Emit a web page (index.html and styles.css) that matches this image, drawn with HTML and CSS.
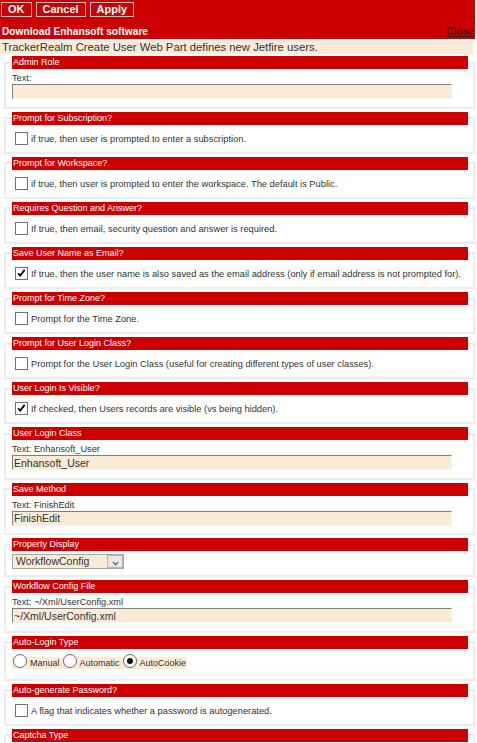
FILE: index.html
```html
<!DOCTYPE html>
<html>
<head>
<meta charset="utf-8">
<title>Create User Web Part</title>
<link rel="stylesheet" href="styles.css">
</head>
<body>
<div class="page">
  <div class="header">
    <div class="buttons">
      <button class="btn">OK</button>
      <button class="btn">Cancel</button>
      <button class="btn">Apply</button>
    </div>
    <div class="titlebar">
      <span class="title">Download Enhansoft software</span>
      <a class="close">Close</a>
    </div>
  </div>
  <div class="desc">TrackerRealm Create User Web Part defines new Jetfire users.</div>

  <fieldset class="prop prop-text">
    <legend>Admin Role</legend>
    <div class="label">Text:</div>
    <input class="text" type="text" value="">
  </fieldset>

  <fieldset class="prop prop-check">
    <legend>Prompt for Subscription?</legend>
    <div class="check"><span class="box"></span><span class="ctext">if true, then user is prompted to enter a subscription.</span></div>
  </fieldset>

  <fieldset class="prop prop-check">
    <legend>Prompt for Workspace?</legend>
    <div class="check"><span class="box"></span><span class="ctext">if true, then user is prompted to enter the workspace. The default is Public.</span></div>
  </fieldset>

  <fieldset class="prop prop-check">
    <legend>Requires Question and Answer?</legend>
    <div class="check"><span class="box"></span><span class="ctext">If true, then email, security question and answer is required.</span></div>
  </fieldset>

  <fieldset class="prop prop-check">
    <legend>Save User Name as Email?</legend>
    <div class="check"><span class="box"><svg viewBox="0 0 13 13" width="11" height="11"><path d="M2.5 6.2 L5 9 L10.2 2.2" fill="none" stroke="#000" stroke-width="2"/></svg></span><span class="ctext">If true, then the user name is also saved as the email address (only if email address is not prompted for).</span></div>
  </fieldset>

  <fieldset class="prop prop-check">
    <legend>Prompt for Time Zone?</legend>
    <div class="check"><span class="box"></span><span class="ctext">Prompt for the Time Zone.</span></div>
  </fieldset>

  <fieldset class="prop prop-check">
    <legend>Prompt for User Login Class?</legend>
    <div class="check"><span class="box"></span><span class="ctext">Prompt for the User Login Class (useful for creating different types of user classes).</span></div>
  </fieldset>

  <fieldset class="prop prop-check">
    <legend>User Login Is Visible?</legend>
    <div class="check"><span class="box"><svg viewBox="0 0 13 13" width="11" height="11"><path d="M2.5 6.2 L5 9 L10.2 2.2" fill="none" stroke="#000" stroke-width="2"/></svg></span><span class="ctext">If checked, then Users records are visible (vs being hidden).</span></div>
  </fieldset>

  <fieldset class="prop prop-text">
    <legend>User Login Class</legend>
    <div class="label">Text: Enhansoft_User</div>
    <input class="text" type="text" value="Enhansoft_User">
  </fieldset>

  <fieldset class="prop prop-text">
    <legend>Save Method</legend>
    <div class="label">Text: FinishEdit</div>
    <input class="text" type="text" value="FinishEdit">
  </fieldset>

  <fieldset class="prop prop-select">
    <legend>Property Display</legend>
    <div class="select"><span class="sel-text">WorkflowConfig</span><span class="sel-btn"><svg viewBox="0 0 10 10" width="9" height="9"><path d="M2 4.5 L5 7.5 L8 4.5" fill="none" stroke="#555" stroke-width="1.3"/></svg></span></div>
  </fieldset>

  <fieldset class="prop prop-text">
    <legend>Workflow Config File</legend>
    <div class="label">Text: ~/Xml/UserConfig.xml</div>
    <input class="text" type="text" value="~/Xml/UserConfig.xml">
  </fieldset>

  <fieldset class="prop">
    <legend>Auto-Login Type</legend>
    <div class="radios">
      <span class="radio"></span><span class="rtext">Manual</span>
      <span class="radio"></span><span class="rtext">Automatic</span>
      <span class="radio on"></span><span class="rtext">AutoCookie</span>
    </div>
  </fieldset>

  <fieldset class="prop">
    <legend>Auto-generate Password?</legend>
    <div class="check"><span class="box"></span><span class="ctext">A flag that indicates whether a password is autogenerated.</span></div>
  </fieldset>

  <fieldset class="prop">
    <legend>Captcha Type</legend>
    <div class="select select-empty"><span class="sel-text"></span><span class="sel-btn"><svg viewBox="0 0 10 10" width="9" height="9"><path d="M2 4.5 L5 7.5 L8 4.5" fill="none" stroke="#555" stroke-width="1.3"/></svg></span></div>
  </fieldset>
</div>
</body>
</html>
```

FILE: styles.css
```css
html, body {
  margin: 0;
  padding: 0;
  background: #fff;
}

body {
  font-family: "Liberation Sans", Arial, sans-serif;
  color: #333;
}

.page {
  width: 477px;
}

.header {
  width: 475px;
  box-sizing: border-box;
  background: #cc0000;
  padding: 2px 1px 1px 1px;
}

.buttons {
  display: flex;
  gap: 4px;
}

.btn {
  height: 15px;
  box-sizing: border-box;
  margin: 0;
  padding: 0 6px;
  border: 1px solid #bdbdbd;
  background: #cc0000;
  color: #fff;
  font-family: "Liberation Sans", Arial, sans-serif;
  font-weight: bold;
  font-size: 11px;
  line-height: 13px;
}

.titlebar {
  display: flex;
  justify-content: space-between;
  align-items: baseline;
  margin-top: 9px;
  height: 12px;
  line-height: 12px;
}

.title {
  padding-left: 1px;
  color: #fff;
  font-weight: bold;
  font-size: 10.2px;
}

.close {
  color: #4a1414;
  font-weight: bold;
  font-size: 10.2px;
  text-decoration: underline;
}

.desc {
  margin-top: 2px;
  width: 473px;
  height: 13px;
  box-sizing: border-box;
  padding-left: 2px;
  background: #faebd7;
  color: #333;
  font-size: 11.3px;
  line-height: 13px;
  white-space: nowrap;
}

.prop {
  margin: 2px 2px 3px 4px;
  padding: 4px 6px 7px 6px;
  border: 2px solid #ececec;
  min-width: 0;
}

.prop-text {
  padding-bottom: 7.5px;
}

.prop-check {
  padding-bottom: 7.14px;
}

.prop-select {
  padding-top: 3px;
  padding-bottom: 6px;
}

.prop legend {
  width: 456px;
  height: 13px;
  box-sizing: border-box;
  padding: 0 1px;
  background: #cc0000;
  color: #fff;
  font-size: 9px;
  line-height: 13px;
  white-space: nowrap;
}

.label {
  font-size: 9.2px;
  line-height: 11px;
  color: #333;
}

.text {
  display: block;
  width: 440px;
  height: 15px;
  box-sizing: border-box;
  margin: 0;
  padding: 0 0 0 1px;
  border-top: 1px solid #7f7f7f;
  border-left: 1px solid #7f7f7f;
  border-right: 1px solid #f4f4f4;
  border-bottom: 1px solid #f4f4f4;
  background: #faebd7;
  color: #333;
  font-family: "Liberation Sans", Arial, sans-serif;
  font-size: 10.5px;
  outline: none;
}

.check {
  display: flex;
  align-items: flex-end;
  height: 16px;
}

.box {
  flex: none;
  width: 13px;
  height: 13px;
  box-sizing: border-box;
  margin: 0 3px 0 3px;
  border: 1px solid #707070;
  background: #fff;
  display: flex;
  align-items: center;
  justify-content: center;
}

.ctext {
  font-size: 9.3px;
  line-height: 11px;
  white-space: nowrap;
  color: #333;
}

.select {
  display: flex;
  width: 112px;
  height: 15px;
  box-sizing: border-box;
  border: 1px solid #a6a6a6;
  background: #faebd7;
}

.sel-text {
  flex: 1;
  padding-left: 3px;
  font-size: 10.5px;
  line-height: 13px;
  color: #333;
}

.sel-btn {
  width: 16px;
  box-sizing: border-box;
  border: 1px solid #b5b5b5;
  background: #e8e8e8;
  display: flex;
  align-items: flex-end;
  justify-content: center;
}

.radios {
  display: inline-flex;
  align-items: flex-end;
  height: 16px;
  background: linear-gradient(to bottom, transparent 4px, #faebd7 4px);
}

.radio {
  flex: none;
  position: relative;
  width: 14px;
  height: 14px;
  box-sizing: border-box;
  margin: 0 3px 1px 1px;
  border: 1px solid #6a6a6a;
  border-radius: 50%;
  background: #fff;
}

.radio.on::after {
  content: "";
  position: absolute;
  left: 3px;
  top: 3px;
  width: 6px;
  height: 6px;
  border-radius: 50%;
  background: #111;
}

.rtext {
  margin-right: 2px;
  font-size: 9px;
  line-height: 11px;
  color: #333;
}

.rtext:last-child {
  margin-right: 0;
}
```
